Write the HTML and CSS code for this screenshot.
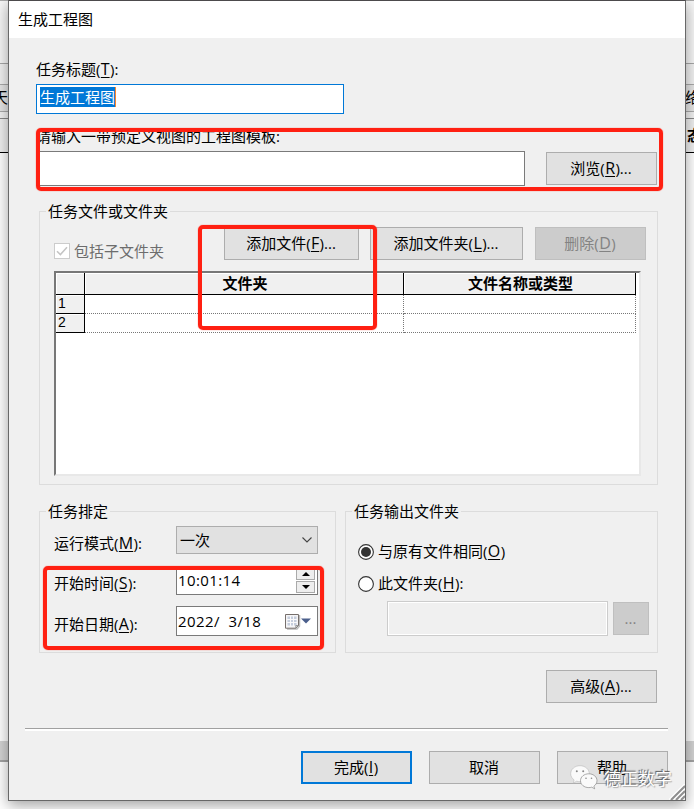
FILE: index.html
```html
<!DOCTYPE html>
<html lang="zh-CN">
<head>
<meta charset="utf-8">
<title>生成工程图</title>
<link rel="stylesheet" href="styles.css">
</head>
<body>
<div class="desktop">
  <div class="backdrop">
    <div class="band band-top"></div>
    <div class="band band-tools"><div class="tool"><span class="cut-left">天</span><span class="cut-right">络</span></div></div>
    <div class="band band-head"><b>态</b></div>
    <div class="band band-main"></div>
    <div class="band band-scroll"></div>
    <div class="band band-foot"></div>
  </div>

  <main class="dialog">
    <header class="titlebar">生成工程图</header>
    <div class="content">
      <label class="label label-title">任务标题(<u>T</u>):</label>
      <div class="input input-title"><span class="selected">生成工程图</span></div>
      <label class="label label-template">请输入一带预定义视图的工程图模板:</label>
      <div class="template-row">
        <div class="input"></div>
        <button class="btn">浏览(<u>R</u>)...</button>
      </div>

      <section class="group group-files">
        <h2 class="legend">任务文件或文件夹</h2>
        <div class="file-actions">
          <div class="check"><svg width="16" height="16" viewBox="0 0 16 16"><rect x=".5" y=".5" width="15" height="15" fill="#fff" stroke="#ccc"/><path d="M3 8.2 6.4 11.6 13 4.3" fill="none" stroke="#c4c4c4" stroke-width="1.5"/></svg><span>包括子文件夹</span></div>
          <button class="btn btn-file">添加文件(<u>F</u>)...</button>
          <button class="btn btn-folder">添加文件夹(<u>L</u>)...</button>
          <button class="btn btn-off">删除(<u>D</u>)</button>
        </div>
        <div class="sheet">
          <div class="grid">
            <div class="th"></div><div class="th">文件夹</div><div class="th">文件名称或类型</div>
            <div class="rh">1</div><div class="td"></div><div class="td"></div>
            <div class="rh">2</div><div class="td"></div><div class="td"></div>
          </div>
        </div>
      </section>

      <div class="columns">
        <section class="group group-schedule">
          <h2 class="legend">任务排定</h2>
          <div class="form">
            <span class="label">运行模式(<u>M</u>):</span>
            <div class="select"><span>一次</span><svg width="12" height="8" viewBox="0 0 12 8"><path d="M1.500 1.500 6 6 10.500 1.500" fill="none" stroke="#444" stroke-width="1.1"/></svg></div>
            <span class="label">开始时间(<u>S</u>):</span>
            <div class="input input-time"><span>10:01:14</span>
              <div class="spinner">
                <i><svg width="8" height="4" viewBox="0 0 8 4"><path d="M0 4 4 0 8 4z"/></svg></i>
                <i><svg width="8" height="4" viewBox="0 0 8 4"><path d="M0 0 4 4 8 0z"/></svg></i>
              </div>
            </div>
            <span class="label">开始日期(<u>A</u>):</span>
            <div class="input input-date"><span>2022/&nbsp; 3/18</span>
              <svg class="calendar" width="26" height="17" viewBox="0 0 26 17"><path d="M2 16h10l2.500-3V2" fill="none" stroke="#bbb" stroke-width="1.5"/><path d="M.5 1.500h13v11l-2.700 2.700H.5z" fill="#f4f4f6" stroke="#766f6c"/><path d="M2.500 3.500h9v9h-9z" fill="#c5cddc"/><path d="M2 6.500h10M2 9.500h10M5.500 3v10M8.500 3v10" stroke="#f8f8fa"/><path d="M13.500 12.500h-2.700v2.700z" fill="#ddd" stroke="#777" stroke-width=".7"/><path d="M16 5.500h10l-5 5z" fill="#4b5f8c"/></svg>
            </div>
          </div>
        </section>

        <section class="group group-output">
          <h2 class="legend">任务输出文件夹</h2>
          <div class="radio"><svg width="16" height="16" viewBox="0 0 16 16"><circle cx="8" cy="8" r="7.4" fill="#fff" stroke="#333" stroke-width="1.1"/><circle cx="8" cy="8" r="5" fill="#333"/></svg><span>与原有文件相同(<u>O</u>)</span></div>
          <div class="radio radio-second"><svg width="16" height="16" viewBox="0 0 16 16"><circle cx="8" cy="8" r="7.4" fill="#fff" stroke="#333" stroke-width="1.1"/></svg><span>此文件夹(<u>H</u>):</span></div>
          <div class="path-row"><div class="input input-off"></div><button class="btn btn-off btn-dots">...</button></div>
        </section>
      </div>

      <div class="advanced"><button class="btn">高级(<u>A</u>)...</button></div>
      <div class="rule"></div>
      <footer class="footer">
        <button class="btn btn-primary">完成(<u>I</u>)</button>
        <button class="btn">取消</button>
        <button class="btn">帮助</button>
      </footer>
    </div>
    <svg class="grip" width="16" height="16" viewBox="0 0 16 16"><g stroke="#fff" stroke-width="1.2"><path d="M0 15.500 15.500 0M5 15.500 15.500 5M10 15.500 15.500 10"/></g><g stroke="#8f8f8f" stroke-width="2"><path d="M2 16 16 2M7 16 16 7M12 16l4-4"/></g></svg>
  </main>

  <div class="mark mark-template"></div>
  <div class="mark mark-file"></div>
  <div class="mark mark-time"></div>

  <div class="watermark">
    <svg width="28" height="25" viewBox="0 0 28 25"><path d="M10 .7c-5.200 0-9.300 3.500-9.300 8 0 2.600 1.300 4.700 3.400 6.200L3.300 18l3.400-1.800c1 .3 2.100.5 3.300.5 5.200 0 9.300-3.600 9.300-8s-4.100-8-9.300-8z" fill="#fafafa" stroke="#bbb" stroke-width=".6"/><path d="M18.800 8.800c-4.700 0-8.300 3-8.300 6.900s3.600 6.900 8.300 6.900c1 0 2-.1 2.900-.4l3 1.600-.8-2.600c1.900-1.300 3.100-3.300 3.100-5.500 0-3.900-3.600-6.900-8.200-6.900z" fill="#fafafa" stroke="#888" stroke-width=".7"/><g fill="#888"><circle cx="6.800" cy="6.200" r="1"/><circle cx="13.200" cy="6.200" r="1"/><circle cx="16" cy="13.300" r=".8"/><circle cx="21.500" cy="13.300" r=".8"/></g></svg>
    <span>德正数字</span>
  </div>
</div>
</body>
</html>
```

FILE: styles.css
```css
* { box-sizing: border-box; }
body, h2 { margin: 0; font-weight: normal; }
body {
  font: 15px/20px "Open Sans", "Noto Sans CJK SC", sans-serif;
  color: #000;
}
u {
  padding: 0 .4px; font-size: 16px; line-height: 1;
  text-decoration: underline; text-decoration-thickness: 1px;
  text-underline-offset: 2px; text-decoration-skip-ink: none;
}
svg { display: block; flex: none; }

.desktop { position: relative; width: 694px; height: 809px; overflow: hidden; background: #fff; }
.backdrop { display: flex; flex-direction: column; height: 809px; }
.band { flex: none; }
.band-top { height: 64px; background: #f7f7f7; border-top: 1px solid #aaa; border-bottom: 1px solid #a8a8a8; }
.band-tools { height: 55px; padding-top: 20px; background: #f2f2f2; border-bottom: 1px solid #888; }
.tool { display: flex; justify-content: space-between; height: 28px; padding-top: 2px; background: #e6e6e6; border: solid #aaa; border-width: 1px 0; overflow: hidden; }
.cut-left { margin-left: -7px; }
.cut-right { margin-right: -6px; }
.band-head { display: flex; justify-content: flex-end; height: 34px; padding-top: 6px; background: #f0f0f0; border-bottom: 1px solid #000; }
.band-head b { margin-right: -8px; }
.band-main { height: 588px; background: #fff; }
.band-scroll { height: 21px; background: #d4d4d4; border-bottom: 2px solid #a4a4a4; }
.band-foot { flex: 1; background: #fff; }

.dialog {
  position: absolute; left: 8px; top: 0; width: 678px; height: 801px;
  background: #f0f0f0; border: 1px solid #686868; border-top-color: #4c4a4c;
  box-shadow: 0 4px 14px rgba(0, 0, 0, .38);
}
.titlebar { height: 37px; padding: 8px 9px; background: #fff; }
.content { display: flex; flex-direction: column; padding: 22px 17px 0 27px; }
.label { white-space: nowrap; height: 20px; line-height: 18px; }
.input { background: #fff; border: 1px solid #7a7a7a; }
.input-title { width: 308px; height: 30px; margin-top: 4px; padding: 2px 3px; border-color: #0078d7; }
.selected { display: block; width: 76px; height: 20px; color: #fff; background: #0078d7; border-right: 1px solid #ff8728; }
.label-template { margin-top: 13px; }
.template-row { display: flex; align-items: center; gap: 21px; height: 35px; margin-top: 4px; }
.template-row .input { width: 489px; height: 35px; }

.btn {
  flex: none; width: 111px; height: 33px; margin: 0; padding: 0 1px 2px 0;
  font: inherit; color: #000; text-align: center; white-space: nowrap;
  background: #e1e1e1; border: 1px solid #adadad;
}
.btn-off { color: #838383; background: #ccc; border-color: #bfbfbf; }
.btn-primary { border: 2px solid #0078d7; }

.group { border: 1px solid #dcdcdc; }
.legend { width: max-content; height: 20px; margin: -10px 0 0 6px; padding: 0 2px; font-size: 15px; line-height: 18px; background: #f0f0f0; }
.group-files { width: 619px; height: 274px; margin: 25px 0 0 3px; }
.file-actions { display: flex; height: 33px; margin: 5px 0 0 14px; }
.check { display: flex; gap: 4px; width: 170px; height: 20px; margin-top: 14px; color: #6d6d6d; }
.check svg { margin-top: 2px; }
.btn-file { width: 135px; }
.btn-folder { width: 153px; margin: 0 12px 0 11px; }
.sheet { width: 587px; height: 205px; margin: 11px 0 0 14px; background: #fff; border: 2px solid; border-color: #777 #e8e8e8 #e8e8e8 #777; }
.grid { display: grid; grid-template-columns: 29px 319px 232px; grid-template-rows: 22px 19px 19px; width: 580px; }
.th { padding-left: 2px; font-weight: bold; text-align: center; line-height: 20px; background: #f0f0f0; border: solid #000; border-width: 0 1px 1px 0; box-shadow: inset 1px 1px #fff; }
.rh { padding-left: 2px; font: 14px/17px "Liberation Sans", sans-serif; background: #f0f0f0; border: solid #000; border-width: 0 1px 1px 0; box-shadow: inset 1px 1px #fff; }
.td { border: dotted #777; border-width: 0 1px 1px 0; }

.columns { display: flex; gap: 9px; height: 142px; margin: 26px 0 0 3px; }
.group-schedule { width: 297px; }
.group-output { width: 313px; }
.form { display: grid; grid-template-columns: 122px 142px; grid-template-rows: 28px 30px 30px; row-gap: 11px; margin: 4px 0 0 14px; }
.form .label { align-self: center; padding-top: 4px; height: 20px; }
.select { display: flex; align-items: center; justify-content: space-between; padding: 0 4px 0 3px; background: #e1e1e1; border: 1px solid #adadad; }
.input-time, .input-date { display: flex; align-items: center; justify-content: space-between; padding-left: 1px; letter-spacing: .4px; }
.input-time { margin-top: 1px; }
.input-date span, .input-time span { padding-bottom: 1px; }
.spinner { display: flex; flex-direction: column; gap: 1px; width: 19px; height: 24px; margin-right: 2px; }
.spinner i { display: grid; place-items: center; flex: 1; background: #eee; border: 1px solid #aaa; }
.calendar { margin-right: 6px; }

.radio { display: flex; align-items: center; gap: 4px; height: 20px; margin: 20px 0 0 12px; }
.radio span { padding-bottom: 2px; }
.radio svg { margin-top: -1px; }
.radio-second { margin-top: 12px; }
.path-row { display: flex; align-items: center; gap: 5px; height: 35px; margin: 7px 0 0 41px; }
.input-off { width: 221px; height: 35px; background: #f0f0f0; border-color: #ccc; box-shadow: inset 0 0 0 1px #fff; }
.btn-dots { width: 36px; }
.advanced { display: flex; justify-content: flex-end; margin: 17px 11px 0 0; }
.rule { height: 3px; margin: 25px 0 0 -11px; background: #fff; border-top: 1px solid #a0a0a0; }
.footer { display: flex; justify-content: flex-end; gap: 17px; margin-top: 20px; }
.grip { position: absolute; right: 0; bottom: 0; }

.mark { position: absolute; border: 4px solid #ff2012; border-radius: 5px; box-shadow: 0 0 1px #ff2012; }
.mark-template { left: 36px; top: 128px; width: 627px; height: 63px; }
.mark-file { left: 198px; top: 225px; width: 179px; height: 105px; }
.mark-time { left: 43px; top: 566px; width: 281px; height: 84px; }

.watermark { position: absolute; left: 570px; top: 765px; display: flex; gap: 6px; font-size: 17px; line-height: 27px; color: #fff; text-shadow: -1px -1px 1px #555, 1px 1px 1px #aaa; }
```
